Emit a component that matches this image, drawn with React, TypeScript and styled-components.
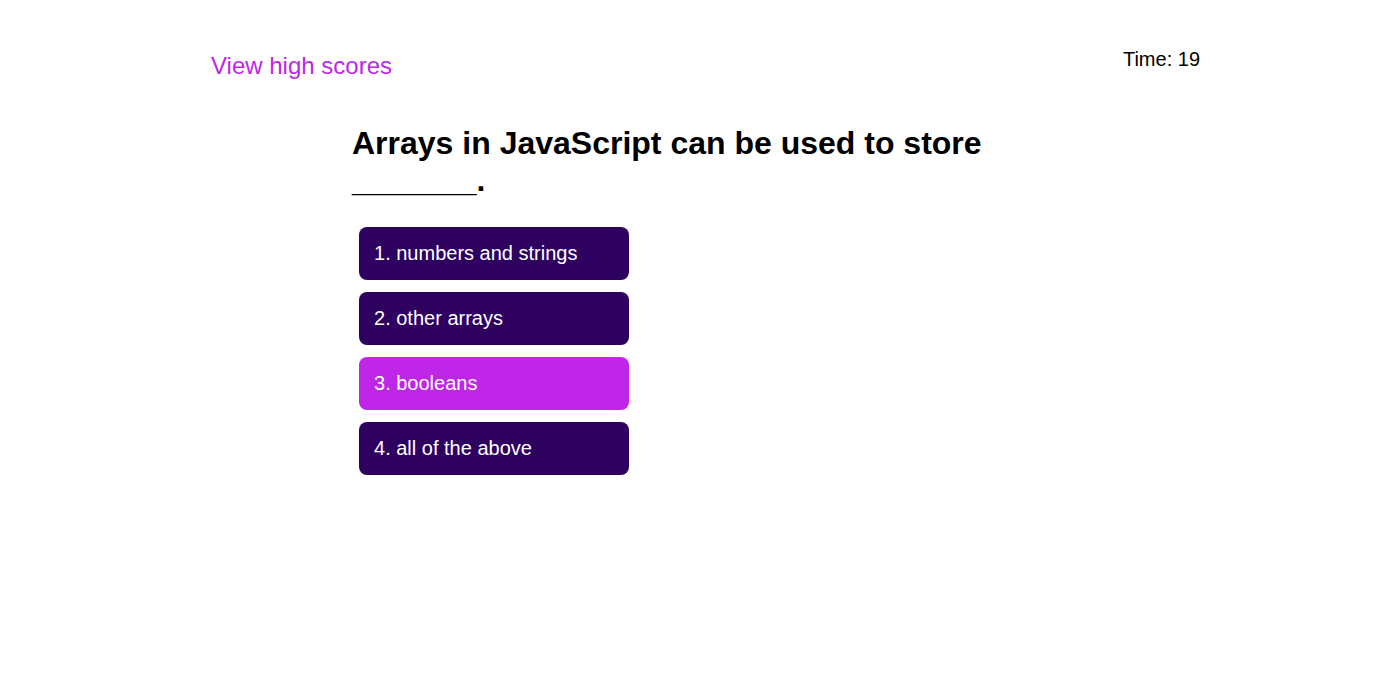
import styled, { createGlobalStyle } from 'styled-components';

const GlobalStyle = createGlobalStyle`
  body {
    margin: 0;
    background: #ffffff;
    font-family: "Liberation Sans", Arial, sans-serif;
    color: #000000;
  }
`;

const Header = styled.header`
  display: flex;
  justify-content: space-between;
  align-items: flex-start;
  padding: 48px 193px 0 211px;
`;

const HighScores = styled.a`
  margin-top: 4px;
  font-size: 24px;
  color: #bf26e8;
  text-decoration: none;
  cursor: pointer;
`;

const Timer = styled.div`
  font-size: 20px;
`;

const Quiz = styled.main`
  margin-left: 352px;
  width: 660px;
`;

const Question = styled.h1`
  margin: 45px 0 28px;
  font-size: 32px;
  font-weight: 700;
`;

const Choices = styled.ul`
  list-style: none;
  margin: 0;
  padding: 0 0 0 7px;
  display: flex;
  flex-direction: column;
  gap: 12px;
`;

const Choice = styled.button<{ $active?: boolean }>`
  display: flex;
  align-items: center;
  width: 270px;
  height: 53px;
  padding: 0 15px;
  border: none;
  border-radius: 8px;
  background-color: ${(props) => (props.$active ? '#bf26e8' : '#2e0060')};
  color: #ffffff;
  font-family: "Liberation Sans", Arial, sans-serif;
  font-size: 20px;
  text-align: left;
  cursor: pointer;
`;

const choices = ['numbers and strings', 'other arrays', 'booleans', 'all of the above'];

function App() {
  return (
    <>
      <GlobalStyle />
      <Header>
        <HighScores>View high scores</HighScores>
        <Timer>Time: 19</Timer>
      </Header>
      <Quiz>
        <Question>Arrays in JavaScript can be used to store _______.</Question>
        <Choices>
          {choices.map((choice, i) => (
            <li key={choice}>
              <Choice $active={i === 2}>
                {i + 1}. {choice}
              </Choice>
            </li>
          ))}
        </Choices>
      </Quiz>
    </>
  );
}

export default App;
